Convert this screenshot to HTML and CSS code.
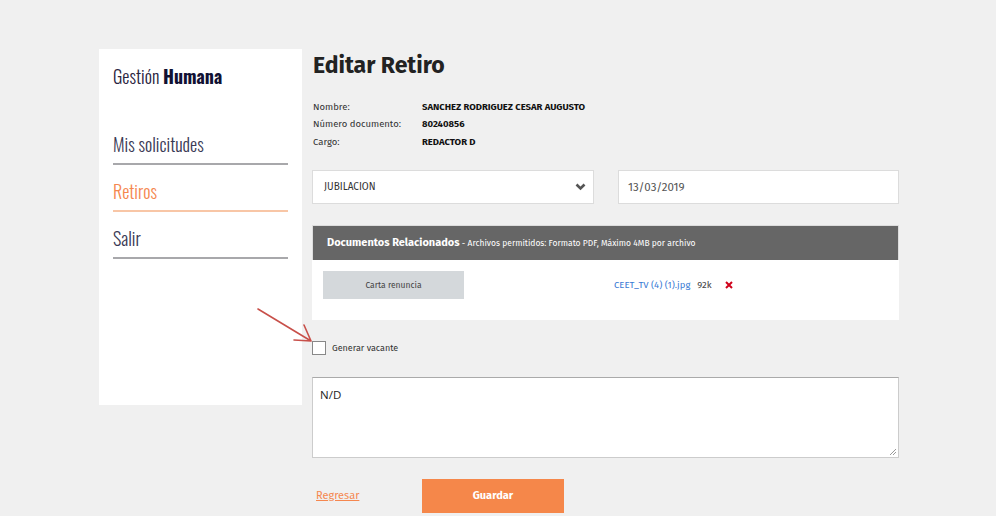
FILE: index.html
```html
<!DOCTYPE html>
<html lang="es">
<head>
<meta charset="utf-8">
<title>Editar Retiro</title>
<link rel="stylesheet" href="styles.css">
</head>
<body>
<div class="page">
  <aside class="sidebar">
    <div class="brand">Gestión <b>Humana</b></div>
    <nav class="nav">
      <a class="nav-item">Mis solicitudes</a>
      <a class="nav-item active">Retiros</a>
      <a class="nav-item">Salir</a>
    </nav>
  </aside>
  <main class="main">
    <h1 class="title">Editar Retiro</h1>
    <dl class="info">
      <div class="info-row"><dt>Nombre:</dt><dd>SANCHEZ RODRIGUEZ CESAR AUGUSTO</dd></div>
      <div class="info-row"><dt>Número documento:</dt><dd>80240856</dd></div>
      <div class="info-row"><dt>Cargo:</dt><dd>REDACTOR D</dd></div>
    </dl>
    <div class="fields">
      <div class="select">
        <span>JUBILACION</span>
        <svg class="chev" width="11" height="8" viewBox="0 0 11 8"><path d="M1.5 1.5 L5.5 5.5 L9.5 1.5" fill="none" stroke="#555" stroke-width="2.6"/></svg>
      </div>
      <div class="input">13/03/2019</div>
    </div>
    <section class="docs">
      <div class="docs-head"><b>Documentos Relacionados</b> - Archivos permitidos: Formato PDF, Máximo 4MB por archivo</div>
      <div class="docs-body">
        <div class="doc-btn">Carta renuncia</div>
        <div class="doc-file">
          <a class="file-link">CEET_TV (4) (1).jpg</a>
          <span class="file-size">92k</span>
          <svg class="del" width="8" height="8" viewBox="0 0 8 8"><path d="M1 1 L7 7 M7 1 L1 7" stroke="#d0021b" stroke-width="2"/></svg>
        </div>
      </div>
    </section>
    <label class="check">
      <span class="box"></span>
      <span>Generar vacante</span>
      <svg class="arrow" width="60" height="40" viewBox="0 0 60 40"><path d="M1 1 L54 33 M54 33 L37 32 M54 33 L47 17" fill="none" stroke="#c8504a" stroke-width="1.6" stroke-linecap="round"/></svg>
    </label>
    <div class="textarea">N/D
      <svg class="grip" width="8" height="8" viewBox="0 0 8 8"><path d="M7 1 L1 7 M7 4 L4 7" stroke="#999" stroke-width="1"/></svg>
    </div>
    <div class="actions">
      <a class="back">Regresar</a>
      <button class="save">Guardar</button>
    </div>
  </main>
</div>
</body>
</html>
```

FILE: styles.css
```css
* { box-sizing: border-box; }
html, body { margin: 0; padding: 0; }
body {
  background: #f0f0f0;
  font-family: "Fira Sans", "Open Sans", "Noto Sans", sans-serif;
  color: #222;
  width: 996px;
  height: 516px;
  overflow: hidden;
}
.page {
  display: flex;
  align-items: flex-start;
  padding: 49px 0 0 99px;
}
.sidebar {
  width: 203px;
  height: 356px;
  background: #fff;
  padding: 16px 14px 0 14px;
  font-family: "Oswald", "Fira Sans Extra Condensed", "Liberation Sans Narrow", sans-serif;
  font-weight: 300;
  color: #2a2a40;
}
.brand {
  font-size: 18px;
  line-height: 22px;
  color: #2a2440;
}
.brand b { color: #111133; font-weight: 700; }
.nav {
  display: flex;
  flex-direction: column;
  margin-top: 44px;
}
.nav-item {
  font-size: 18px;
  line-height: 25px;
  padding-top: 1px;
  padding-bottom: 6px;
  border-bottom: 2px solid #a8a8ab;
  margin-bottom: 13px;
  color: #3a3a55;
}
.nav-item.active {
  color: #f5874f;
  border-bottom-color: #f8c6a6;
}
.main {
  width: 587px;
  margin-left: 10px;
}
.title {
  font-size: 23px;
  font-weight: 700;
  line-height: 28px;
  margin: 2px 0 0 1px;
  color: #222;
}
.info {
  margin: 19px 0 0 1px;
  font-size: 9.5px;
}
.info-row {
  display: flex;
  height: 17.5px;
  align-items: center;
}
.info dt { width: 109px; color: #333; }
.info dd { margin: 0; font-weight: 700; color: #111; }
.fields {
  display: flex;
  justify-content: space-between;
  margin-top: 19px;
}
.select, .input {
  height: 34px;
  background: #fff;
  border: 1px solid #dcdcdc;
  display: flex;
  align-items: center;
}
.select {
  width: 282px;
  padding: 0 7px 0 11px;
  justify-content: space-between;
  font-size: 10px;
  color: #333;
}
.input {
  width: 281px;
  padding: 0 9px;
  font-size: 11.5px;
  color: #555;
}
.docs {
  margin-top: 21px;
  background: #fff;
}
.docs-head {
  background: #666;
  color: #fff;
  height: 35px;
  display: flex;
  align-items: center;
  padding: 0 14px;
  font-size: 8.5px;
  white-space: pre;
  border: 1px solid #ddd;
  border-bottom: 0;
}
.docs-head b { font-size: 11px; }
.docs-body {
  height: 60px;
  display: flex;
  align-items: flex-start;
  padding: 11px 11px 0;
}
.doc-btn {
  width: 141px;
  height: 28px;
  background: #d4d8db;
  display: flex;
  align-items: center;
  justify-content: center;
  font-size: 8.5px;
  color: #444;
}
.doc-file {
  display: flex;
  align-items: center;
  height: 28px;
  margin-left: 150px;
  font-size: 9.5px;
}
.file-link { color: #3a7bd5; }
.file-size { margin-left: 7px; color: #444; }
.del { margin-left: 13px; }
.check {
  position: relative;
  display: flex;
  align-items: center;
  margin-top: 21px;
  font-size: 9px;
  color: #333;
}
.box {
  width: 14px;
  height: 14px;
  border: 1px solid #888;
  background: #fff;
  margin-right: 6px;
}
.arrow {
  position: absolute;
  left: -55px;
  top: -33px;
}
.textarea {
  position: relative;
  margin-top: 22px;
  height: 81px;
  background: #fff;
  border: 1px solid #aaa;
  border-color: #aaa #ccc #ccc #ccc;
  padding: 9px 7px;
  font-family: "Open Sans", sans-serif;
  font-size: 11.5px;
  color: #222;
}
.grip { position: absolute; right: 1px; bottom: 1px; }
.actions {
  display: flex;
  align-items: center;
  margin-top: 21px;
}
.back {
  font-size: 11px;
  color: #f5874f;
  text-decoration: underline;
  margin-left: 4px;
  width: 106px;
}
.save {
  width: 142px;
  height: 34px;
  border: 0;
  background: #f5874a;
  color: #fff;
  font-family: inherit;
  font-weight: 700;
  font-size: 11px;
}
```
